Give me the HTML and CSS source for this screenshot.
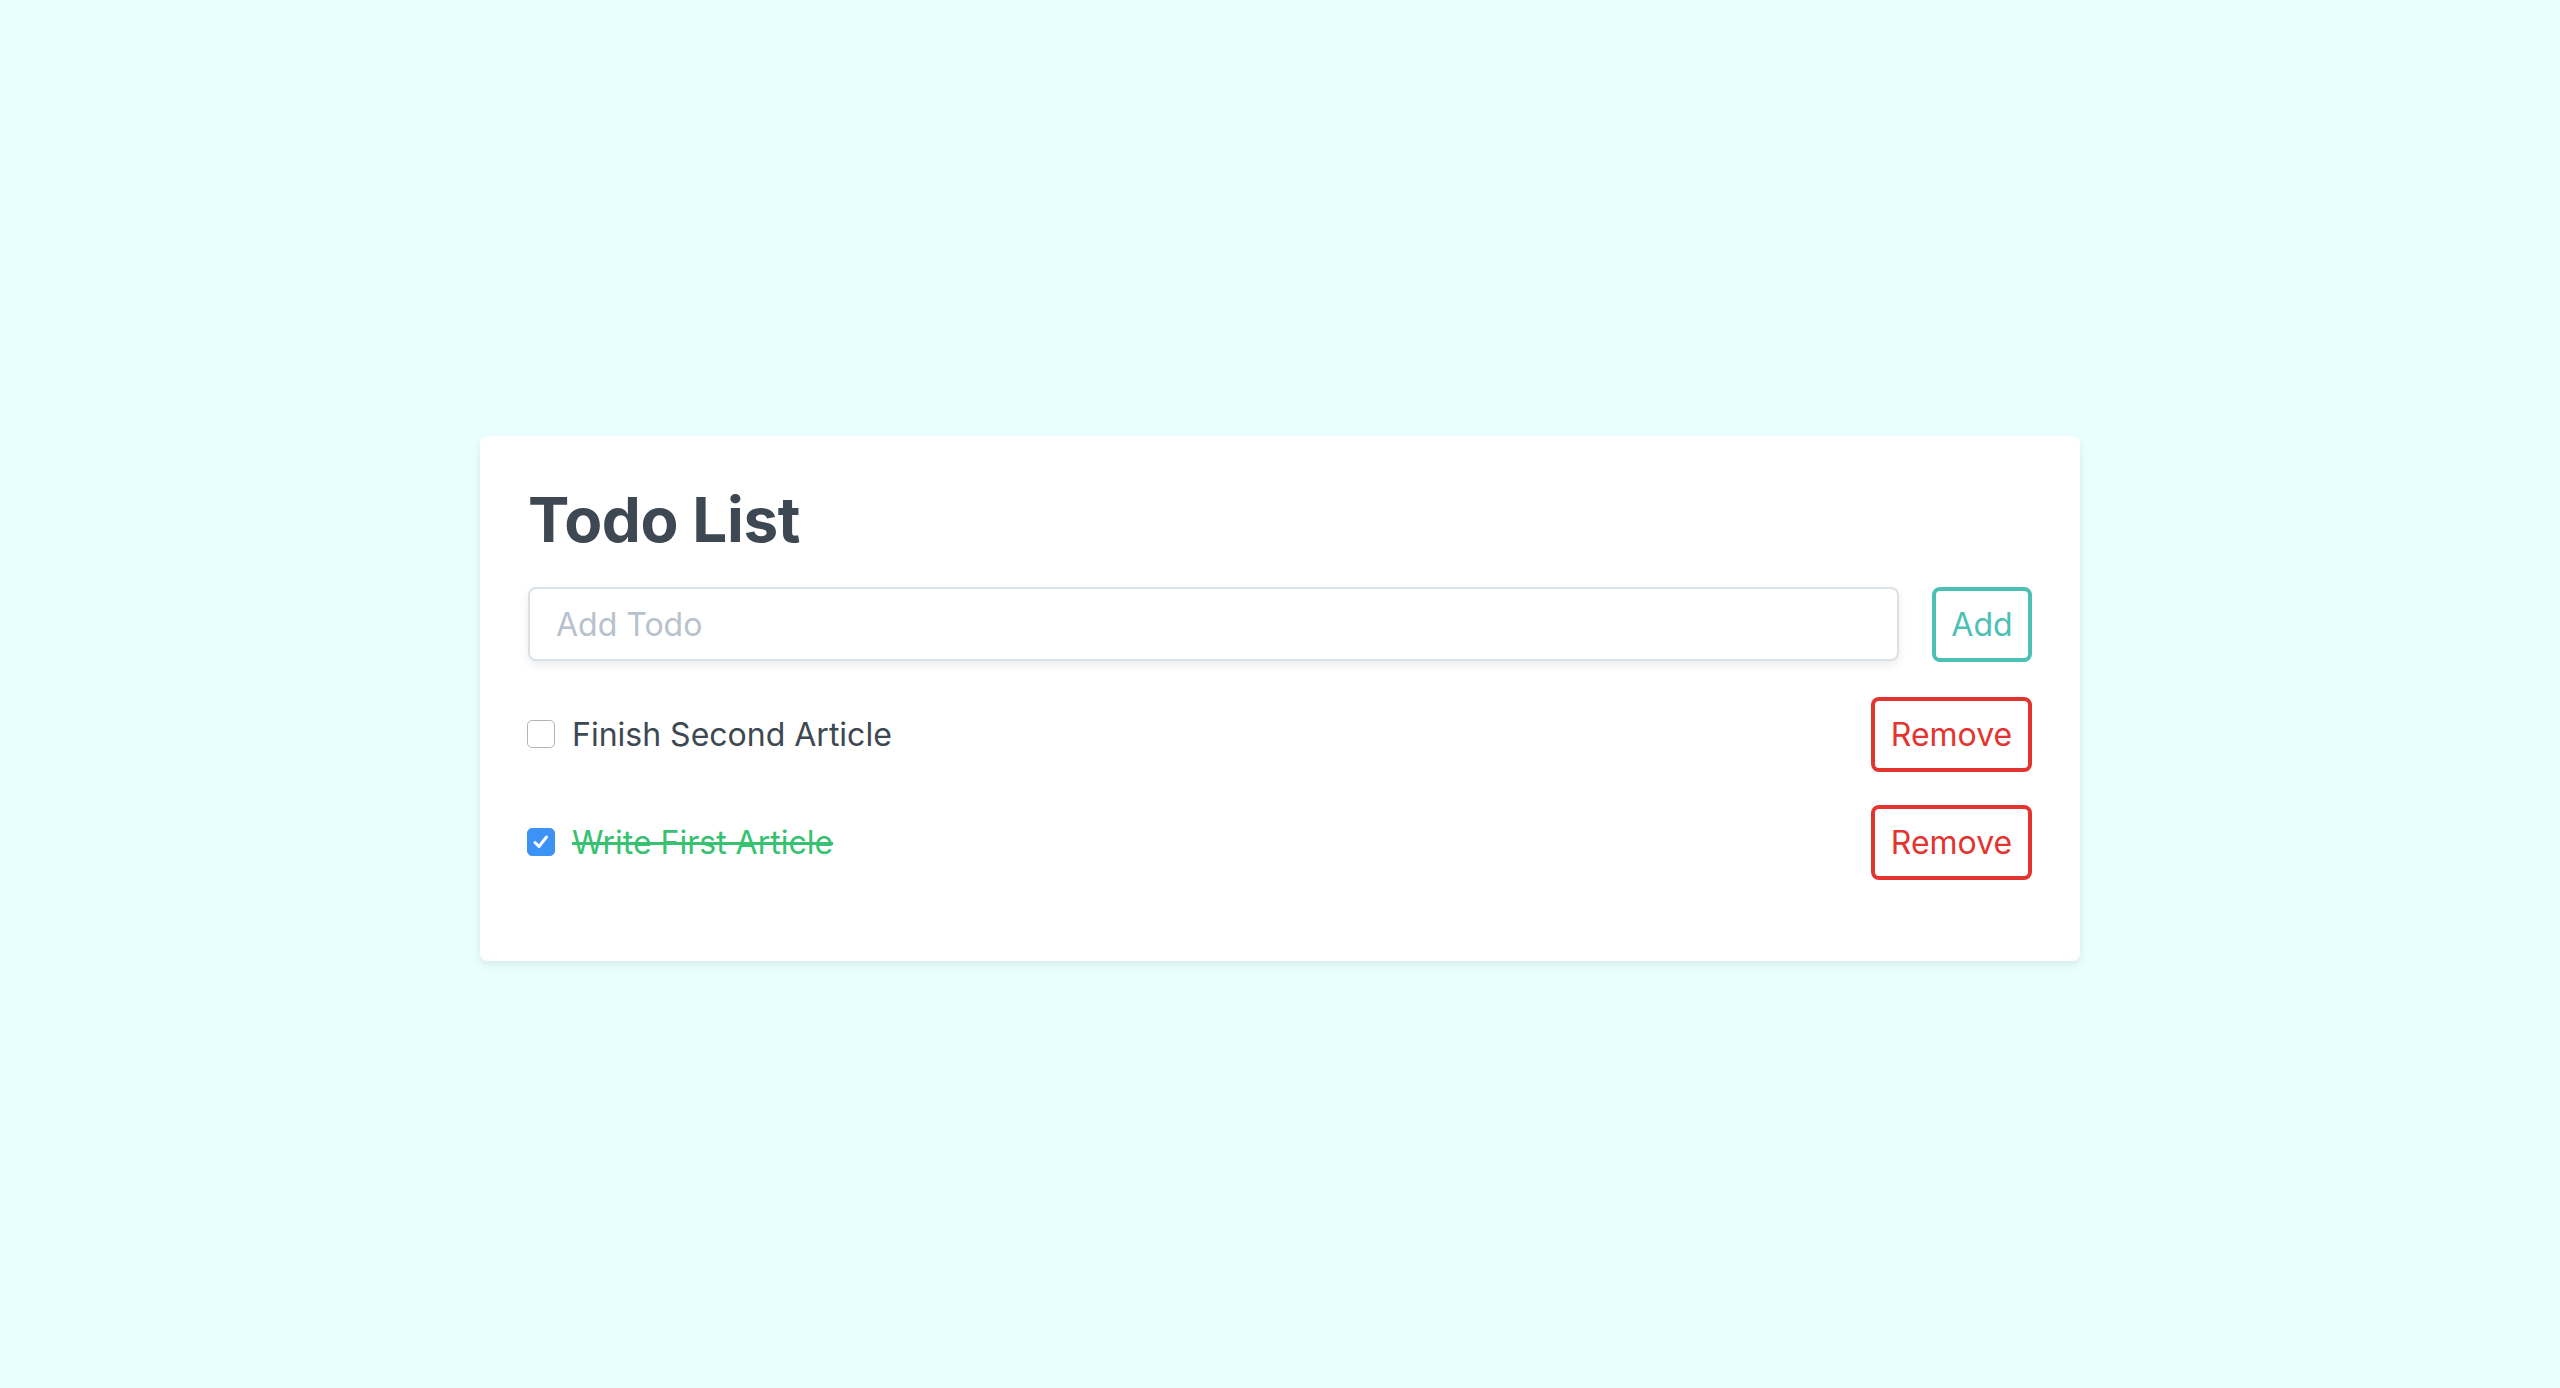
FILE: index.html
```html
<html>
<head>
	<title>Todo List</title>
	<meta name="viewport" content="width=device-width, initial-scale=1.0">
	<link rel="stylesheet" href="styles.css">
</head>
<body>
	<div class="page">
		<div class="card">
			<h1 class="title">Todo List</h1>
			<div class="add-row">
				<input class="todo-input" type="text" placeholder="Add Todo" />
				<button class="btn btn-add">Add</button>
			</div>
			<div class="todo-row">
				<label class="todo">
					<span class="box"></span>
					<span class="todo-text">Finish Second Article</span>
				</label>
				<button class="btn btn-remove">Remove</button>
			</div>
			<div class="todo-row">
				<label class="todo">
					<span class="box checked">
						<svg width="22" height="22" viewBox="0 0 22 22"><path d="M5 11.5 L9 15.5 L16.5 6" fill="none" stroke="#fff" stroke-width="3" stroke-linecap="round" stroke-linejoin="round"/></svg>
					</span>
					<span class="todo-text done">Write First Article</span>
				</label>
				<button class="btn btn-remove">Remove</button>
			</div>
		</div>
	</div>
</body>
</html>
```

FILE: styles.css
```css
body {
	margin: 0;
	background-color: #e8fffe;
	font-family: "Inter", "Liberation Sans", sans-serif;
	color: #3d4852;
}
.page {
	min-height: 100vh;
	display: flex;
	align-items: center;
	justify-content: center;
}
.card {
	box-sizing: border-box;
	width: 1600px;
	margin-top: 8px;
	padding: 48px 48px 81px 48px;
	background-color: #fff;
	border-radius: 8px;
	box-shadow: 0 4px 8px 0 rgba(0, 0, 0, 0.08);
}
.title {
	margin: -2px 0 29px 0;
	font-size: 62px;
	line-height: 76px;
	font-weight: 700;
	letter-spacing: -0.4px;
	color: #3d4852;
}
.add-row {
	display: flex;
	align-items: center;
}
.todo-input {
	flex: 1;
	box-sizing: border-box;
	height: 74px;
	margin-right: 33px;
	padding: 0 26px;
	border: 2px solid #dae1e7;
	border-radius: 8px;
	box-shadow: 0 4px 8px 0 rgba(0, 0, 0, 0.08);
	font-family: inherit;
	font-size: 32px;
	color: #3d4852;
	outline: none;
}
.todo-input::placeholder {
	color: #b8c2cc;
}
.btn {
	box-sizing: border-box;
	height: 75px;
	padding: 0;
	background: #fff;
	border: 4px solid;
	border-radius: 8px;
	font-family: inherit;
	font-size: 32px;
	text-align: center;
	cursor: pointer;
}
.btn-add {
	width: 100px;
	color: #4dc0b5;
	border-color: #4dc0b5;
}
.btn-remove {
	width: 161px;
	color: #e3342f;
	border-color: #e3342f;
}
.todo-row {
	display: flex;
	align-items: center;
	justify-content: space-between;
	margin-top: 35px;
}
.todo-row + .todo-row {
	margin-top: 33px;
}
.todo {
	display: flex;
	align-items: center;
}
.box {
	box-sizing: border-box;
	width: 28px;
	height: 28px;
	margin-left: -1px;
	margin-right: 17px;
	border: 1.5px solid #b4b4b4;
	border-radius: 5px;
	background: #fff;
	display: flex;
	align-items: center;
	justify-content: center;
}
.box.checked {
	background: #3d92f5;
	border-color: #3d92f5;
}
.todo-text {
	font-size: 32px;
	color: #3d4852;
}
.todo-text.done {
	color: #38c172;
	text-decoration: line-through;
}
```
